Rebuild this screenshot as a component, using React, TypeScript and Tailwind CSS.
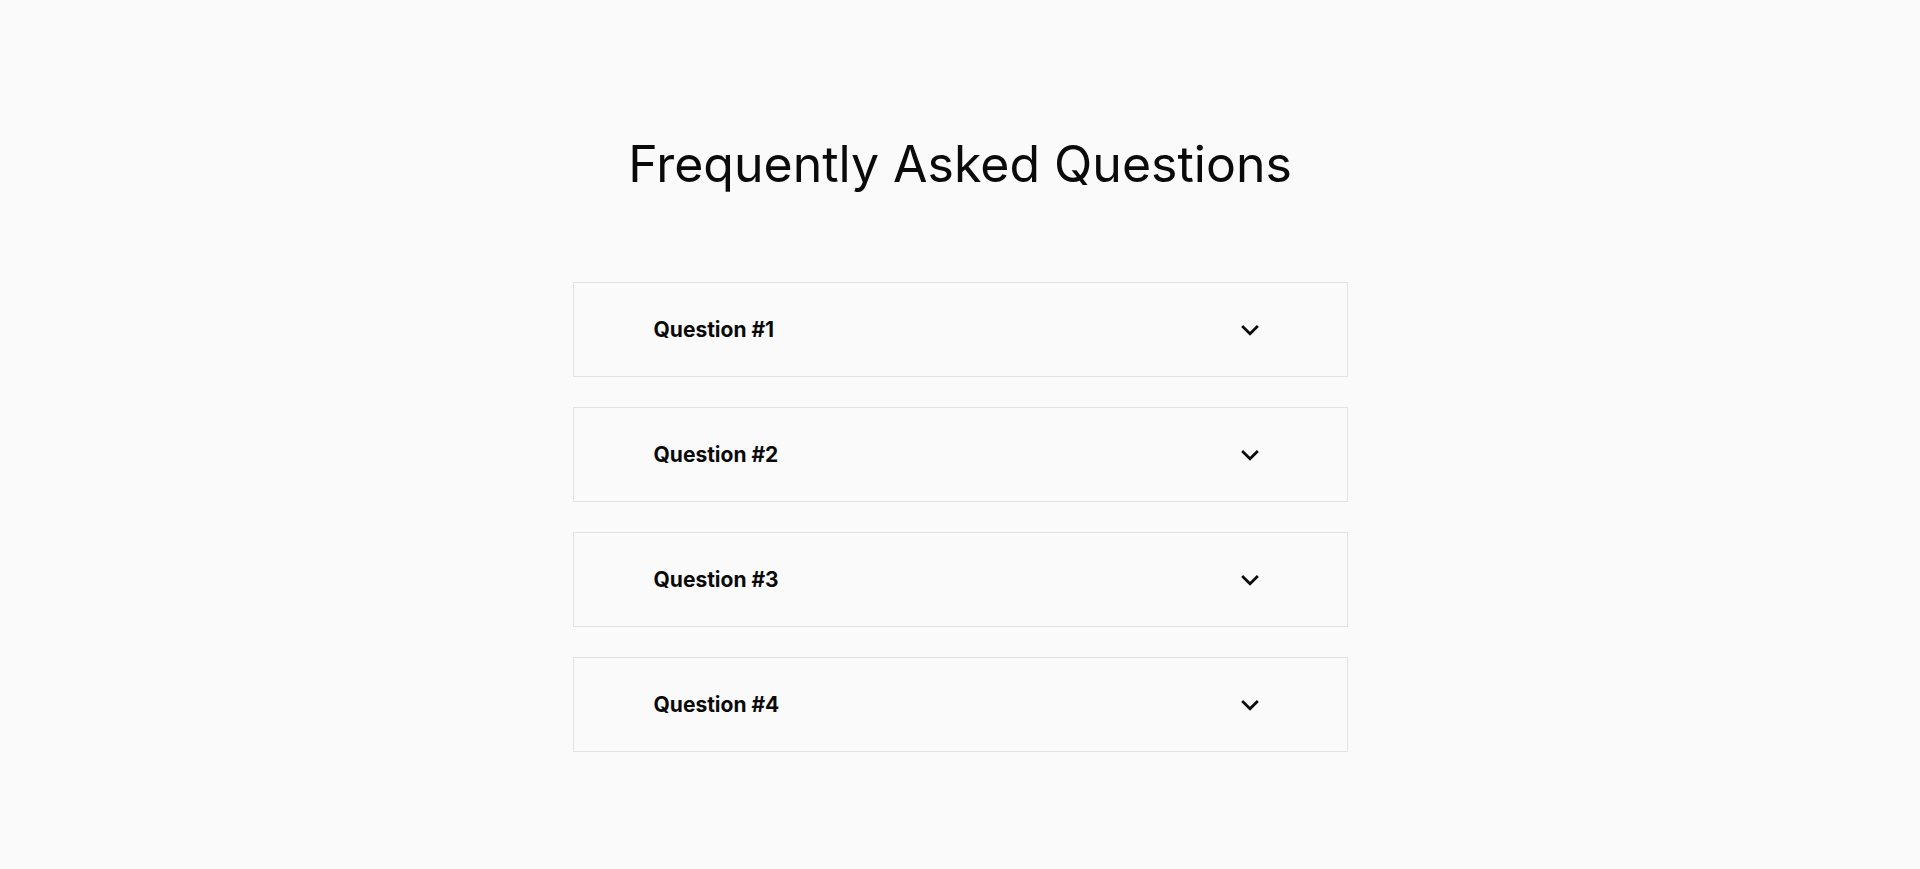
import { useState } from "react"

const questions = [
    { id: 1, title: "Question #1", answer: "Answer to the first question." },
    { id: 2, title: "Question #2", answer: "Answer to the second question." },
    { id: 3, title: "Question #3", answer: "Answer to the third question." },
    { id: 4, title: "Question #4", answer: "Answer to the fourth question." },
]

const Chevron = ({ open }: { open: boolean }) => (
    <svg
        width="30"
        height="30"
        viewBox="0 0 24 24"
        fill="none"
        stroke="currentColor"
        strokeWidth="2.2"
        strokeLinecap="square"
        className={open ? "rotate-180" : ""}
    >
        <path d="M6.5 9.5 12 15l5.5-5.5" />
    </svg>
)

export default function App() {
    const [openId, setOpenId] = useState<number | null>(null)

    return (
        <div className="min-h-screen bg-[#fafafa] text-[#0a0a0a] font-['Inter',sans-serif]">
            <div className="mx-auto w-[775px] pt-[134px]">
                <h1 className="text-center text-[50px] font-normal leading-[60px]">
                    Frequently Asked Questions
                </h1>

                <div className="mt-[88px] flex flex-col gap-[30px]">
                    {questions.map((q) => (
                        <div key={q.id} className="border border-[#e3e3e3] bg-[#fafafa]">
                            <button
                                onClick={() => setOpenId(openId === q.id ? null : q.id)}
                                className="flex h-[93px] w-full items-center justify-between pl-[80px] pr-[82px] text-left"
                            >
                                <span className="text-[21px] font-bold">{q.title}</span>
                                <Chevron open={openId === q.id} />
                            </button>
                            {openId === q.id && (
                                <div className="px-[80px] pb-8 text-base text-gray-600">{q.answer}</div>
                            )}
                        </div>
                    ))}
                </div>
            </div>
        </div>
    )
}
